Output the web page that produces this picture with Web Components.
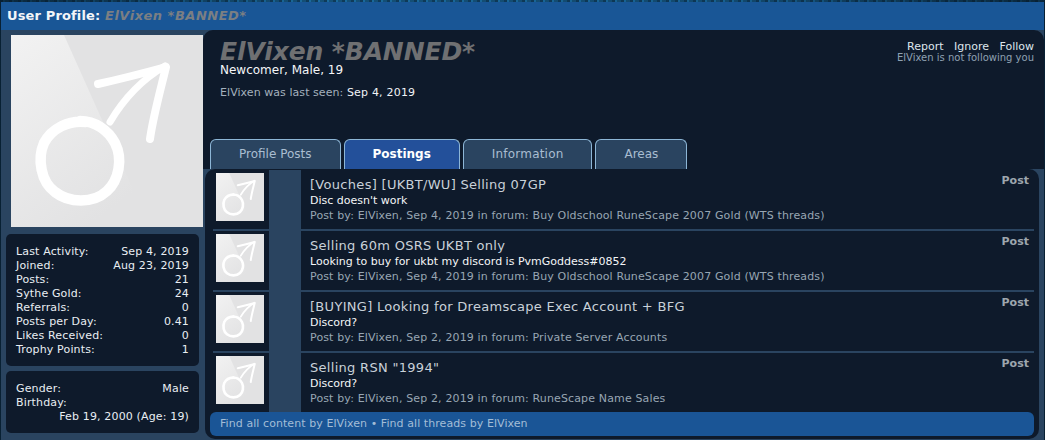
<!DOCTYPE html>
<html>
<head>
<meta charset="utf-8">
<title>User Profile</title>
<style>
html, body { margin: 0; height: 440px; overflow: hidden; }
body {
    background:
        repeating-linear-gradient(90deg, rgba(6, 20, 34, .55) 0 3px, rgba(6, 20, 34, 0) 3px 5px, rgba(6, 20, 34, .3) 5px 9px),
        linear-gradient(90deg, #0c3048 0, #1a6a9c 30%, #17608f 70%, #0c3048 100%);
    font-family: "DejaVu Sans", Verdana, sans-serif;
    font-size: 11px;
}
</style>
</head>
<body>
<profile-page>
    <title-bar slot="title" name="ElVixen *BANNED*"></title-bar>

    <side-avatar slot="side" size="192"></side-avatar>
    <stat-box slot="side">
        <stat-line label="Last Activity:" value="Sep 4, 2019"></stat-line>
        <stat-line label="Joined:" value="Aug 23, 2019"></stat-line>
        <stat-line label="Posts:" value="21"></stat-line>
        <stat-line label="Sythe Gold:" value="24"></stat-line>
        <stat-line label="Referrals:" value="0"></stat-line>
        <stat-line label="Posts per Day:" value="0.41"></stat-line>
        <stat-line label="Likes Received:" value="0"></stat-line>
        <stat-line label="Trophy Points:" value="1"></stat-line>
    </stat-box>
    <stat-box slot="side">
        <stat-line label="Gender:" value="Male"></stat-line>
        <stat-line label="Birthday:" value=""></stat-line>
        <stat-line label="" value="Feb 19, 2000 (Age: 19)"></stat-line>
    </stat-box>

    <profile-head slot="main">
        <tab-item>Profile Posts</tab-item>
        <tab-item active>Postings</tab-item>
        <tab-item style="letter-spacing: .2px">Information</tab-item>
        <tab-item>Areas</tab-item>
    </profile-head>
    <post-list slot="main">
        <post-row heading="[Vouches] [UKBT/WU] Selling 07GP" snippet="Disc doesn't work" meta="Post by: ElVixen, Sep 4, 2019 in forum: Buy Oldschool RuneScape 2007 Gold (WTS threads)"></post-row>
        <post-row heading="Selling 60m OSRS UKBT only" snippet="Looking to buy for ukbt my discord is PvmGoddess#0852" meta="Post by: ElVixen, Sep 4, 2019 in forum: Buy Oldschool RuneScape 2007 Gold (WTS threads)"></post-row>
        <post-row heading="[BUYING] Looking for Dreamscape Exec Account + BFG" snippet="Discord?" meta="Post by: ElVixen, Sep 2, 2019 in forum: Private Server Accounts"></post-row>
        <post-row heading='Selling RSN "1994"' snippet="Discord?" meta="Post by: ElVixen, Sep 2, 2019 in forum: RuneScape Name Sales" last></post-row>
    </post-list>
</profile-page>

<script>
class ProfilePage extends HTMLElement{
    constructor(){
        super();
        this.attachShadow({mode: "open"}).innerHTML = /*html*/`
            <style>
                :host{
                    display: block;
                    margin: 2px 1px 0 1px;
                    height: 438px;
                    background: #2a4460;
                    overflow: hidden;
                }
                .body{
                    display: grid;
                    grid-template-columns: 202px 1fr;
                }
                .side{
                    display: flex;
                    flex-direction: column;
                    padding-top: 5px;
                }
            </style>
            <slot name="title"></slot>
            <div class="body">
                <div class="side"><slot name="side"></slot></div>
                <div class="main"><slot name="main"></slot></div>
            </div>
        `
    }
}
customElements.define("profile-page", ProfilePage)

class TitleBar extends HTMLElement{
    constructor(){
        super();
        this.attachShadow({mode: "open"}).innerHTML = /*html*/`
            <style>
                :host{
                    display: block;
                    height: 28px;
                    line-height: 28px;
                    padding-left: 6px;
                    background: #195696;
                    color: #f2f5f8;
                    font-size: 13px;
                    font-weight: bold;
                    letter-spacing: .14px;
                }
                em{
                    color: #7b7f83;
                    letter-spacing: .5px;
                }
            </style>
            User Profile: <em>${this.getAttribute("name")}</em>
        `
    }
}
customElements.define("title-bar", TitleBar)

class SideAvatar extends HTMLElement{
    constructor(){
        super();
        const size = this.getAttribute("size");
        this.attachShadow({mode: "open"}).innerHTML = /*html*/`
            <style>
                :host{
                    display: block;
                    flex: none;
                    width: ${size}px;
                    height: ${size}px;
                    line-height: 0;
                }
                :host([size="192"]){
                    margin: 0 0 7px 10px;
                }
                svg{ display: block; }
            </style>
            <svg width="${size}" height="${size}" viewBox="0 0 192 192">
                <defs>
                    <linearGradient id="shine" x1="0" y1="0" x2="0.55" y2="1">
                        <stop offset="0" stop-color="#f2f2f2"/>
                        <stop offset="1" stop-color="#e2e2e3"/>
                    </linearGradient>
                </defs>
                <rect width="192" height="192" fill="#e2e2e3"/>
                <polygon points="0,0 53,0 139,192 0,192" fill="url(#shine)"/>
                <g fill="none" stroke="#fff" stroke-linecap="round" stroke-linejoin="round">
                    <path stroke-width="10.5" d="M75 87C58 85 41 93 33 108C26 124 30 147 44 157C58 168 82 169 96 156C108 145 112 124 104 108C97 95 84 86 69 86"/>
                    <path stroke-width="7" d="M99 87C112 65 130 45 154 31"/>
                    <path stroke-width="8" d="M87 49C110 44 133 38 155 32C149 57 142 82 139 104"/>
                </g>
            </svg>
        `
    }
}
customElements.define("side-avatar", SideAvatar)

class StatBox extends HTMLElement{
    constructor(){
        super();
        this.attachShadow({mode: "open"}).innerHTML = /*html*/`
            <style>
                :host{
                    display: block;
                    margin: 0 4px 5px 5px;
                    padding: 11px 10px 9px;
                    background: #0e1a2b;
                    border-radius: 5px;
                    color: #e9eef3;
                    line-height: 14px;
                    letter-spacing: .15px;
                }
            </style>
            <slot></slot>
        `
    }
}
customElements.define("stat-box", StatBox)

class StatLine extends HTMLElement{
    constructor(){
        super();
        this.attachShadow({mode: "open"}).innerHTML = /*html*/`
            <style>
                :host{
                    display: flex;
                    justify-content: space-between;
                    height: 14px;
                    white-space: nowrap;
                }
            </style>
            <span>${this.getAttribute("label")}</span>
            <span>${this.getAttribute("value")}</span>
        `
    }
}
customElements.define("stat-line", StatLine)

class ProfileHead extends HTMLElement{
    constructor(){
        super();
        this.attachShadow({mode: "open"}).innerHTML = /*html*/`
            <style>
                :host{
                    display: flex;
                    flex-direction: column;
                    box-sizing: border-box;
                    height: 139px;
                    padding: 10px 10px 0 17px;
                    background: #0e1a2b;
                    border-radius: 10px 10px 0 0;
                }
                .top{
                    display: flex;
                    justify-content: space-between;
                }
                h1{
                    margin: 0;
                    font-size: 25px;
                    line-height: 23px;
                    font-style: italic;
                    font-weight: bold;
                    color: #6f7072;
                    white-space: nowrap;
                    letter-spacing: -.12px;
                }
                .sub{
                    font-size: 12px;
                    line-height: 14px;
                    color: #f4f6f8;
                }
                .seen{
                    margin-top: 9px;
                    line-height: 14px;
                    color: #a4b1be;
                    letter-spacing: .06px;
                }
                .seen b{
                    font-weight: normal;
                    color: #f0f3f6;
                    letter-spacing: .2px;
                }
                .actions{
                    text-align: right;
                    color: #dfe6ed;
                    line-height: 11px;
                    padding-top: 1px;
                }
                .actions span{
                    margin-left: 7px;
                }
                .follow{
                    font-size: 10px;
                    line-height: 11px;
                    color: #8fa1b2;
                }
                .tabs{
                    display: flex;
                    gap: 3px;
                    margin: auto 0 0 -10px;
                }
            </style>
            <div class="top">
                <div>
                    <h1>ElVixen *BANNED*</h1>
                    <div class="sub">Newcomer, Male, 19</div>
                    <div class="seen">ElVixen was last seen: <b>Sep 4, 2019</b></div>
                </div>
                <div class="actions">
                    <div><span>Report</span> <span>Ignore</span> <span>Follow</span></div>
                    <div class="follow">ElVixen is not following you</div>
                </div>
            </div>
            <div class="tabs"><slot></slot></div>
        `
    }
}
customElements.define("profile-head", ProfileHead)

class TabItem extends HTMLElement{
    constructor(){
        super();
        this.attachShadow({mode: "open"}).innerHTML = /*html*/`
            <style>
                :host{
                    display: block;
                    box-sizing: border-box;
                    height: 30px;
                    line-height: 28px;
                    padding: 0 28px;
                    border: 1px solid #8db6d6;
                    border-bottom: none;
                    border-radius: 6px 6px 0 0;
                    background: #2a4460;
                    color: #a9bdd1;
                    font-size: 12px;
                    white-space: nowrap;
                }
                :host([active]){
                    background: #23509a;
                    color: #fff;
                    font-weight: bold;
                }
            </style>
            <slot></slot>
        `
    }
}
customElements.define("tab-item", TabItem)

class PostList extends HTMLElement{
    constructor(){
        super();
        this.attachShadow({mode: "open"}).innerHTML = /*html*/`
            <style>
                :host{
                    display: block;
                    box-sizing: border-box;
                    height: 270px;
                    margin: 0 5px 0 2px;
                    padding: 1px 5px 0 8px;
                    background: #0e1a2b;
                    border-radius: 10px;
                }
                .foot{
                    margin-left: -3px;
                    height: 24px;
                    line-height: 24px;
                    padding-left: 10px;
                    background: #1a5596;
                    border-radius: 6px;
                    color: #a3bdd6;
                    letter-spacing: .07px;
                }
            </style>
            <slot></slot>
            <div class="foot">Find all content by ElVixen • Find all threads by ElVixen</div>
        `
    }
}
customElements.define("post-list", PostList)

class PostRow extends HTMLElement{
    constructor(){
        super();
        this.attachShadow({mode: "open"}).innerHTML = /*html*/`
            <style>
                :host{
                    display: grid;
                    grid-template-columns: 56px 32px 1fr auto;
                    box-sizing: border-box;
                    height: 61px;
                    border-bottom: 2px solid #2a4460;
                }
                :host([last]){
                    height: 59px;
                    border-bottom: none;
                }
                .pic{
                    padding: 3px 0 0 3px;
                }
                .band{
                    background: #2a4460;
                }
                .text{
                    padding: 7px 0 0 9px;
                    white-space: nowrap;
                    line-height: 15px;
                }
                h3{
                    margin: 0;
                    font-size: 13px;
                    line-height: 16px;
                    font-weight: normal;
                    color: #c9d1d9;
                    letter-spacing: .3px;
                }
                .snippet{
                    color: #f4f6f8;
                }
                .meta{
                    color: #98a6b3;
                    letter-spacing: .14px;
                }
                .kind{
                    padding: 4px 5px 0 0;
                    line-height: 14px;
                    font-weight: bold;
                    color: #9ea6ae;
                }
            </style>
            <div class="pic"><side-avatar size="48"></side-avatar></div>
            <div class="band"></div>
            <div class="text">
                <h3>${this.getAttribute("heading")}</h3>
                <div class="snippet">${this.getAttribute("snippet")}</div>
                <div class="meta">${this.getAttribute("meta")}</div>
            </div>
            <div class="kind">Post</div>
        `
    }
}
customElements.define("post-row", PostRow)
</script>
</body>
</html>
